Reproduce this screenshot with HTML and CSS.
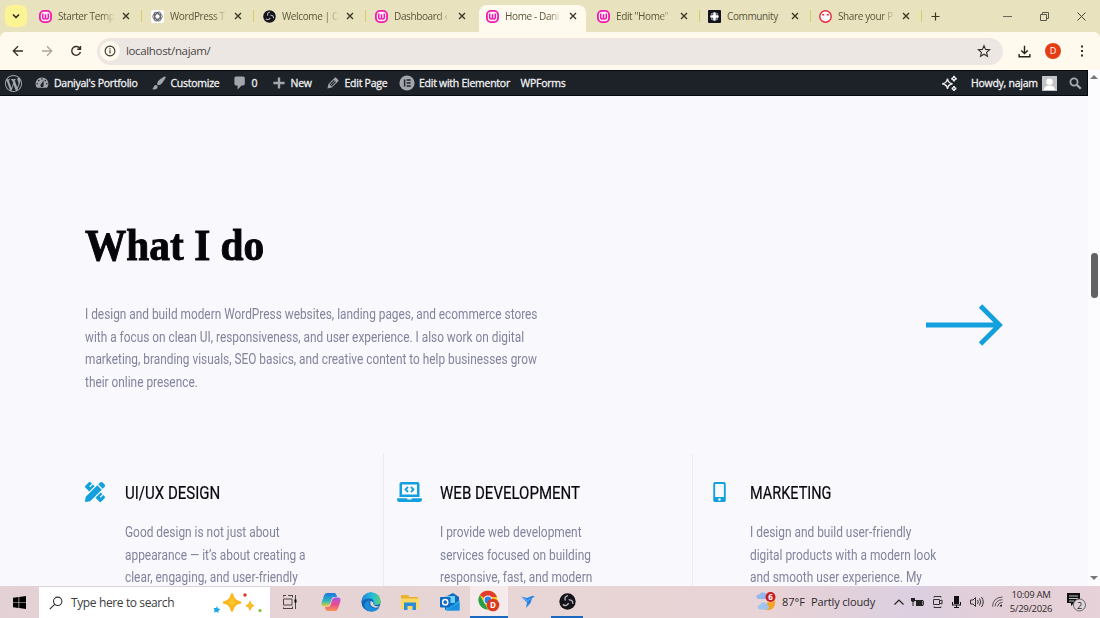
FILE: index.html
```html
<!DOCTYPE html>
<html lang="en">
<head>
<meta charset="utf-8">
<title>Home - Daniyal's Portfolio</title>
<link rel="stylesheet" href="styles.css">
</head>
<body>
<svg class="defs" aria-hidden="true">
  <symbol id="w" viewBox="0 0 13 13"><rect x=".9" y=".9" width="11.2" height="11.2" rx="4" fill="#fff0f8" stroke="#f21aac" stroke-width="1.800"/><path d="M3.700 3.600v3.400q0 2 1.400 2T6.500 7.400V4.200v3.200q0 1.600 1.400 1.600t1.400-2V3.600" fill="none" stroke="#f21aac" stroke-width="1.500"/></symbol>
  <symbol id="x" viewBox="0 0 8 8"><path d="M1 1l6 6M7 1L1 7" fill="none" stroke="#3b3822" stroke-width="1.400"/></symbol>
  <symbol id="obs" viewBox="0 0 16 16"><circle cx="8" cy="8" r="7.700" fill="#15141a"/><path d="M8.500 2.500q-4 1-2.500 4.500M3.500 11q4 2 5.500-1.500M13 10q0-4-4-3.500" fill="none" stroke="#b9b8c0" stroke-width="1.300"/><circle cx="8" cy="8" r="1.300" fill="#15141a"/></symbol>
</svg>
<header class="tabs">
  <button class="tab-search"><svg viewBox="0 0 8 8" width="8" height="8"><path d="M1 2.500l3 3 3-3" fill="none" stroke="#222" stroke-width="1.500"/></svg></button>
  <div class="tab wide"><svg class="fav"><use href="#w"/></svg><span class="title fade"><b>Starter Temp</b></span><svg class="close"><use href="#x"/></svg></div>
  <div class="tab wide"><svg class="fav" viewBox="0 0 13 13"><rect width="13" height="13" rx="2.500" fill="#fff"/><g fill="none" stroke="#55585c" stroke-width=".9"><ellipse cx="6.500" cy="6.500" rx="4.800" ry="2.600"/><ellipse cx="6.500" cy="6.500" rx="4.800" ry="2.600" transform="rotate(60 6.500 6.500)"/><ellipse cx="6.500" cy="6.500" rx="4.800" ry="2.600" transform="rotate(120 6.500 6.500)"/></g></svg><span class="title fade"><b>WordPress T</b></span><svg class="close"><use href="#x"/></svg></div>
  <div class="tab wide"><svg class="fav"><use href="#obs"/></svg><span class="title fade"><b>Welcome | O</b></span><svg class="close"><use href="#x"/></svg></div>
  <div class="tab plain"><svg class="fav"><use href="#w"/></svg><span class="title fade"><b>Dashboard ‹</b></span><svg class="close"><use href="#x"/></svg></div>
  <div class="tab active"><svg class="fav"><use href="#w"/></svg><span class="title fade"><b>Home - Dani</b></span><svg class="close"><use href="#x"/></svg></div>
  <div class="tab"><svg class="fav"><use href="#w"/></svg><span class="title fade"><b>Edit "Home"</b></span><svg class="close"><use href="#x"/></svg></div>
  <div class="tab"><svg class="fav" viewBox="0 0 13 13"><rect width="13" height="13" rx="1" fill="#11131d"/><circle cx="6.500" cy="6.500" r="4.200" fill="#fff"/><path d="M4.800 1.500v3.300H1.500M8.200 1.500v3.300h3.300M4.800 11.500V8.200H1.500M8.200 11.500V8.200h3.300" fill="none" stroke="#11131d" stroke-width=".8"/></svg><span class="title"><b>Community</b></span><svg class="close"><use href="#x"/></svg></div>
  <div class="tab"><svg class="fav" viewBox="0 0 13 13"><circle cx="6.500" cy="6.500" r="5.700" fill="#fff" stroke="#e62639" stroke-width="1.400"/><path d="M3.200 4.800h2M7.800 4.800h2" stroke="#e62639" stroke-width="1.400"/></svg><span class="title fade"><b>Share your P</b></span><svg class="close"><use href="#x"/></svg></div>
  <svg class="new-tab" viewBox="0 0 9 9"><path d="M4.500.5v8M.5 4.500h8" stroke="#3b3822" stroke-width="1.200"/></svg>
  <div class="window-controls">
    <svg viewBox="0 0 9 9"><path d="M0 4.500h9" stroke="#6a685a"/></svg>
    <svg viewBox="0 0 9 9"><path d="M.5 2.500h6v6h-6zM2.500 2.500V.5h6v6h-2" fill="none" stroke="#5a584c"/></svg>
    <svg viewBox="0 0 9 9"><path d="M.5.5l8 8M8.500.5l-8 8" stroke="#45443a"/></svg>
  </div>
</header>
<nav class="toolbar">
  <svg class="nav-icon" viewBox="0 0 12 12"><path d="M11 6H1.500M6 1.300L1.300 6 6 10.700" fill="none" stroke="#33312a" stroke-width="1.300"/></svg>
  <svg class="nav-icon" viewBox="0 0 12 12"><path d="M1 6h9.500M6 1.300L10.700 6 6 10.700" fill="none" stroke="#aaa69c" stroke-width="1.300"/></svg>
  <svg class="nav-icon" viewBox="0 0 12 12"><path d="M10 3.800A4.400 4.400 0 1 0 10.400 7M10.500 1v3.300H7.200" fill="none" stroke="#33312a" stroke-width="1.400"/></svg>
  <div class="omnibox">
    <span class="info"><svg viewBox="0 0 12 12" width="12" height="12"><circle cx="6" cy="6" r="4.900" fill="none" stroke="#33312a" stroke-width="1.100"/><path d="M6 5.300v3.200M6 3.300v1.200" stroke="#33312a" stroke-width="1.100"/></svg></span>
    <span class="url">localhost/najam/</span>
    <svg class="star" viewBox="0 0 24 24"><path d="M12 2.800l2.700 6.400 6.900.6-5.200 4.500 1.600 6.800-6-3.600-6 3.600 1.600-6.800-5.200-4.500 6.900-.6z" fill="none" stroke="#33312a" stroke-width="1.900"/></svg>
  </div>
  <svg class="download" viewBox="0 0 14 14"><path d="M7 .8v8M3.500 5.800L7 9.200l3.500-3.400M1.200 9.800v2.900h11.600V9.800" fill="none" stroke="#252515" stroke-width="1.500"/></svg>
  <span class="profile">D</span>
  <svg class="menu" viewBox="0 0 4 12"><path d="M1 .5h2v2H1zM1 5h2v2H1zM1 9.500h2v2H1z" fill="#33312a"/></svg>
</nav>
<div class="viewport">
  <div class="content">
    <div class="adminbar">
      <a class="item wp"><svg class="ico logo" viewBox="0 0 20 20"><path d="M20 10c0-5.510-4.490-10-10-10C4.480 0 0 4.490 0 10c0 5.520 4.480 10 10 10 5.510 0 10-4.480 10-10zM7.780 15.370L4.370 6.220c.55-.02 1.170-.08 1.170-.08.5-.06.44-1.130-.06-1.110 0 0-1.450.11-2.370.11-.18 0-.37 0-.58-.01C4.120 2.690 6.870 1.110 10 1.110c2.330 0 4.450.87 6.050 2.340-.68-.11-1.650.39-1.650 1.580 0 .74.45 1.360.9 2.100.35.61.55 1.360.55 2.460 0 1.490-1.400 5-1.400 5l-3.030-8.370c.54-.02.82-.17.82-.17.5-.05.44-1.250-.06-1.220 0 0-1.440.12-2.380.12-.87 0-2.330-.12-2.330-.12-.5-.03-.56 1.200-.06 1.220l.92.08 1.260 3.410zM17.410 10c.24-.64.74-1.870.43-4.250.7 1.290 1.050 2.710 1.050 4.250 0 3.290-1.730 6.240-4.400 7.780.97-2.590 1.940-5.200 2.920-7.780zM6.100 18.090C3.120 16.650 1.110 13.530 1.110 10c0-1.300.23-2.480.72-3.590C3.250 10.300 4.670 14.200 6.100 18.090zm4.030-6.630l2.580 6.980c-.86.29-1.760.45-2.710.45-.79 0-1.570-.11-2.290-.33.81-2.380 1.620-4.740 2.420-7.100z"/></svg></a>
      <a class="item site"><svg class="ico" viewBox="0 0 20 20"><path d="M3.760 16h12.480c1.100-1.370 1.760-3.110 1.760-5 0-4.420-3.580-8-8-8s-8 3.580-8 8c0 1.890.66 3.630 1.760 5zM10 4c.55 0 1 .45 1 1s-.45 1-1 1-1-.45-1-1 .45-1 1-1zM6 6c.55 0 1 .45 1 1s-.45 1-1 1-1-.45-1-1 .45-1 1-1zm8 0c.55 0 1 .45 1 1s-.45 1-1 1-1-.45-1-1 .45-1 1-1zm-5.370 5.550L12 7v6c0 1.100-.9 2-2 2s-2-.9-2-2c0-.57.24-1.080.63-1.450zM4 10c.55 0 1 .45 1 1s-.45 1-1 1-1-.45-1-1 .45-1 1-1zm12 0c.55 0 1 .45 1 1s-.45 1-1 1-1-.45-1-1 .45-1 1-1z"/></svg><span>Daniyal's Portfolio</span></a>
      <a class="item customize"><svg class="ico" viewBox="0 0 20 20"><path d="M18.330 3.570s.27-.8-.31-1.360c-.53-.52-1.220-.24-1.220-.24-.61.3-5.760 3.470-7.670 5.570-.86.96-2.060 3.790-1.090 4.820.92.98 3.960-.17 4.790-1 2.060-2.060 5.210-7.170 5.500-7.790zM1.400 17.650c2.370-1.560 1.460-3.410 3.230-4.640.93-.65 2.220-.62 3.080.29.63.67.8 2.570-.16 3.460-1.570 1.450-4 1.550-6.150.89z"/></svg><span>Customize</span></a>
      <a class="item comments"><svg class="ico" viewBox="0 0 20 20"><path d="M5 2h9c1.100 0 2 .9 2 2v7c0 1.100-.9 2-2 2h-2l-5 5v-5H5c-1.100 0-2-.9-2-2V4c0-1.100.9-2 2-2z"/></svg><span>0</span></a>
      <a class="item new"><svg class="ico" viewBox="0 0 20 20"><path d="M8.500 3h3v5.500H17v3h-5.500V17h-3v-5.500H3v-3h5.500z"/></svg><span>New</span></a>
      <a class="item edit"><svg class="ico" viewBox="0 0 20 20"><path d="M13.890 3.390l2.710 2.720c.46.46.42 1.240.03 1.640l-8.010 8.020-5.560 1.160 1.160-5.580s7.600-7.630 7.990-8.030c.39-.39 1.220-.39 1.680.07zm-2.730 2.790l-5.590 5.610 1.110 1.110 5.540-5.650zm-2.970 8.230l5.580-5.600-1.070-1.080-5.590 5.600z"/></svg><span>Edit Page</span></a>
      <a class="item elementor"><svg class="ico" viewBox="0 0 20 20"><circle cx="10" cy="10" r="9.500"/><path d="M7 5.500v9M9.500 6.300h5M9.500 10h5M9.500 13.700h5" stroke="#1d2128" stroke-width="1.800"/></svg><span>Edit with Elementor</span></a>
      <a class="item forms"><span>WPForms</span></a>
      <svg class="sparkle" viewBox="0 0 17 17"><path d="M6.500 3.500Q7 8 11.500 8.800 7 9.500 6.500 14 6 9.500 1.200 8.800 6 8 6.500 3.500zM13 .8q.3 2.400 2.700 2.900-2.400.4-2.700 2.800-.3-2.400-2.700-2.800Q12.700 3.200 13 .8zM13 11q.3 2 2.300 2.500-2 .4-2.300 2.500-.3-2.100-2.300-2.500Q12.700 13 13 11z" fill="none" stroke="#e8e8ec" stroke-width="1.400"/></svg>
      <span class="howdy">Howdy, najam</span>
      <svg class="avatar" viewBox="0 0 15 15"><path fill="#c3c3c7" d="M0 0h15v15H0z"/><circle cx="7.500" cy="5.800" r="3.300" fill="#fff"/><path d="M2 14q0-4.500 5.500-4.500T13 14z" fill="#fff"/></svg>
      <svg class="search" viewBox="0 0 13 13"><circle cx="5" cy="5" r="3.600" fill="none" stroke="#a7aaad" stroke-width="1.800"/><path d="M7.800 7.800l4 4" stroke="#a7aaad" stroke-width="2.300"/></svg>
    </div>
    <section class="intro">
      <div>
        <h2>What I do</h2>
        <p class="copy lead">I design and build modern WordPress websites, landing pages, and ecommerce stores<br>with a focus on clean UI, responsiveness, and user experience. I also work on digital<br>marketing, branding visuals, SEO basics, and creative content to help businesses grow<br>their online presence.</p>
      </div>
      <svg class="arrow" viewBox="0 0 78 44"><path d="M0 22h73M54.500 3L73.500 22 54.500 41" fill="none" stroke="#14a0dc" stroke-width="4.800"/></svg>
    </section>
    <section class="services">
      <article class="first">
        <svg class="svc" viewBox="0 0 512 512"><path d="M109.460 244.040l134.580-134.560-44.120-44.120-61.680 61.680a7.919 7.919 0 0 1-11.210 0l-11.210-11.210c-3.100-3.100-3.100-8.120 0-11.210l61.680-61.680-33.640-33.650C131.470-3.100 111.390-3.100 99 9.290L9.290 99c-12.380 12.390-12.390 32.470 0 44.860l100.170 100.180zm388.470-116.800c18.760-18.760 18.750-49.170 0-67.930l-45.250-45.250c-18.760-18.760-49.180-18.760-67.950 0l-46.020 46.010 113.200 113.200 46.020-46.030zM316.080 82.710l-297 296.960L.32 487.110c-2.530 14.490 10.090 27.110 24.590 24.560l107.450-18.840L429.280 195.900 316.080 82.710zm186.630 285.430l-33.640-33.640-61.680 61.680c-3.100 3.100-8.120 3.100-11.210 0l-11.210-11.210c-3.090-3.100-3.090-8.120 0-11.210l61.680-61.680-44.140-44.140L267.930 402.500l100.210 100.200c12.390 12.390 32.470 12.390 44.860 0l89.710-89.700c12.390-12.390 12.390-32.470 0-44.860z"/></svg>
        <div><h3>UI/UX DESIGN</h3><p class="copy">Good design is not just about<br>appearance — it’s about creating a<br>clear, engaging, and user-friendly</p></div>
      </article>
      <article class="second">
        <svg class="svc" viewBox="0 0 640 512"><path d="M255.030 261.650c6.250 6.250 16.380 6.250 22.630 0l11.310-11.310c6.250-6.250 6.250-16.380 0-22.630L253.250 192l35.710-35.720c6.250-6.250 6.250-16.380 0-22.630l-11.310-11.310c-6.250-6.250-16.380-6.250-22.630 0l-58.340 58.340c-6.250 6.250-6.250 16.380 0 22.630l58.350 58.340zm96.010-11.300l11.310 11.310c6.250 6.250 16.380 6.250 22.630 0l58.340-58.340c6.250-6.250 6.250-16.380 0-22.630l-58.340-58.340c-6.250-6.250-16.380-6.250-22.630 0l-11.310 11.310c-6.250 6.250-6.250 16.380 0 22.630L386.750 192l-35.710 35.720c-6.250 6.250-6.250 16.380 0 22.630zM624 416H381.540c-.74 19.810-14.710 32-32.740 32H288c-18.690 0-33.020-17.470-32.770-32H16c-8.800 0-16 7.200-16 16v16c0 35.200 28.800 64 64 64h512c35.200 0 64-28.800 64-64v-16c0-8.800-7.200-16-16-16zM576 48c0-26.400-21.600-48-48-48H112C85.600 0 64 21.600 64 48v336h512V48zm-64 272H128V64h384v256z"/></svg>
        <div><h3>WEB DEVELOPMENT</h3><p class="copy">I provide web development<br>services focused on building<br>responsive, fast, and modern</p></div>
      </article>
      <article class="third">
        <svg class="svc" viewBox="0 0 320 512"><path d="M272 0H48C21.500 0 0 21.500 0 48v416c0 26.500 21.500 48 48 48h224c26.500 0 48-21.500 48-48V48c0-26.500-21.500-48-48-48zM160 480c-17.700 0-32-14.300-32-32s14.300-32 32-32 32 14.300 32 32-14.300 32-32 32zm112-108c0 6.600-5.400 12-12 12H60c-6.600 0-12-5.400-12-12V60c0-6.600 5.400-12 12-12h200c6.600 0 12 5.400 12 12v312z"/></svg>
        <div><h3>MARKETING</h3><p class="copy">I design and build user-friendly<br>digital products with a modern look<br>and smooth user experience. My</p></div>
      </article>
    </section>
  </div>
  <div class="scrollbar"><i class="up"></i><i class="thumb"></i><i class="down"></i></div>
</div>
<footer class="taskbar">
  <div class="cell start"><svg viewBox="0 0 14 14" width="13" height="13"><path d="M0 2l6-.9v5.500H0zM6.700 1L14 0v6.600H6.700zM0 7.300h6v5.600L0 12zM6.700 7.300H14V14l-7.300-1z"/></svg></div>
  <div class="find">
    <svg viewBox="0 0 14 14" width="14" height="14"><circle cx="8.700" cy="5.300" r="4.200" fill="none" stroke="#333" stroke-width="1.100"/><path d="M5.700 8.300L.8 13.200" stroke="#333" stroke-width="1.200"/></svg>
    <span class="hint">Type here to search</span>
    <svg class="stars" viewBox="0 0 50 22"><path d="M19 2.500q1.200 6.700 8 8-6.800 1.300-8 8-1.200-6.700-8-8 6.800-1.300 8-8z" fill="#fbc52a" stroke="#f8b822" stroke-width="2.600" stroke-linejoin="round"/><path d="M37 9.500q.7 3.600 3.700 4.200-3 .6-3.700 4.200-.7-3.600-3.700-4.200 3-.6 3.700-4.200z" fill="#fbc52a" stroke="#f8b822" stroke-width="1.300" stroke-linejoin="round"/><path d="M4 14l1 2.500 2.500.4-2 1.800-.2 2.300-2-1.300-2.300 1 .6-2.500L.5 16l2.600-.1z" fill="#1ba9e4"/><circle cx="32" cy="3" r="1.700" fill="#d83b20"/><circle cx="47" cy="18.500" r="1.600" fill="#7cc52c"/></svg>
  </div>
  <div class="cell w40"><svg viewBox="0 0 14 14" width="14" height="14"><path d="M0 .5h3M5 .5h5M0 13.500h10M.5 4h8.500v6H.5zM0 .5v2M9.500.5v2M0 13.500v-2M9.500 13.500v-2M12.500 0v14" fill="none" stroke="#4a4547"/><path d="M11.500 4.500h2v3h-2z"/></svg></div>
  <div class="cell w42"><svg viewBox="0 0 20 18" width="20" height="18"><defs><linearGradient id="c1" x2="0" y2="1"><stop stop-color="#1c75e4"/><stop offset=".6" stop-color="#30b7bd"/><stop offset="1" stop-color="#f3cf26"/></linearGradient><linearGradient id="c2" x2="0" y2="1"><stop stop-color="#a65ae8"/><stop offset=".5" stop-color="#e94a8c"/><stop offset="1" stop-color="#f99451"/></linearGradient></defs><path d="M6 0h7q2 0 2.500 2l.5 2h-3q-2 0-2.500 2L9 11q-.7 2.500-3 2.500H3Q-.5 13.500.7 9.500L3 2.500Q3.800 0 6 0z" fill="url(#c1)"/><path d="M14 18H7q-2 0-2.500-2L4 14h3q2 0 2.500-2L11 7q.7-2.500 3-2.500h3q3.500 0 2.300 4L17 15.500Q16.200 18 14 18z" fill="url(#c2)"/></svg></div>
  <div class="cell w38"><svg viewBox="0 0 20 20" width="20" height="20"><defs><linearGradient id="e1" x2="1"><stop stop-color="#2186d8"/><stop offset=".6" stop-color="#25bfd8"/><stop offset="1" stop-color="#60d06a"/></linearGradient></defs><circle cx="10" cy="10" r="9.600" fill="#1265b5"/><path d="M.4 10A9.600 9.600 0 0 1 19.600 9.500Q19.500 13 15 13q-3.500 0-2.500-2.500Q13 6.500 8.500 6.500 3 6.500.4 10z" fill="url(#e1)"/><path d="M8.500 8.500Q6.500 16 15 16.500q2 0 3.500-1-3 4.500-8.500 4.100Q3 18 3.500 12.500 5 8.500 8.500 8.500z" fill="#1a8edb"/><path d="M9.500 9q-1.500 5 4 6.500 3 .5 5-1Q14 15 12 12q1-2-2.500-3z" fill="#e5d5d8"/></svg></div>
  <div class="cell w40"><svg viewBox="0 0 18 16" width="18" height="16"><path d="M0 1h7l1.500 2H17v12H0z" fill="#eab030"/><path d="M0 4.500h18V15H0z" fill="#fbd765"/><path d="M3 8.500h12V16h-3.500v-4h-5v4H3z" fill="#2c8cd6"/></svg></div>
  <div class="cell w40"><svg viewBox="0 0 20 20" width="20" height="20"><path d="M5 5l8-4 6 4v13H5z" fill="#1269bd"/><path d="M6 4h9v7H6z" fill="#67d4f5"/><path d="M6 11l6 3 7.500-6v10.500H6z" fill="#27aceb"/><path d="M6 18.500l13.500-8V18.500z" fill="#1890df"/><rect y="5" width="10.500" height="10.500" rx="1" fill="#0f69c3"/><circle cx="5.200" cy="10.200" r="2.600" fill="none" stroke="#fff" stroke-width="1.500"/></svg></div>
  <div class="cell w38 current"><svg viewBox="0 0 22 22" width="22" height="22"><circle cx="10" cy="10" r="9.500" fill="#fbc81c"/><path d="M10 10L1.800 5.200A9.500 9.500 0 0 1 18.200 5.500L19 7h-9z" fill="#e33b2d"/><path d="M1.800 5.200L6.500 13 10 19.500A9.500 9.500 0 0 1 1.800 5.200z" fill="#269f4c"/><circle cx="10" cy="10" r="4.500" fill="#fff"/><circle cx="10" cy="10" r="3.500" fill="#3080e8"/><circle cx="15" cy="15" r="6.300" fill="#da3a20"/><text class="badge" x="15" y="17.800">D</text></svg></div>
  <div class="cell w40"><svg viewBox="0 0 14 12" width="14" height="12"><path d="M0 .5l6 1.500L11 0l3 .3-3 2L9.500 7 5 12l1-5.500z" fill="#2482e8"/><path d="M1 1l5.500 4L9.500 2.500" fill="none" stroke="#8fc4f5" stroke-width=".8"/></svg></div>
  <div class="cell w32 running"><svg width="17" height="17"><use href="#obs"/></svg></div>
  <div class="tray">
    <svg class="weather" viewBox="0 0 20 19"><path d="M11 10q6 1 8-2 1 6-3 9-5 3-9-1 5-1 4-6z" fill="#f6a425"/><path d="M4 7q-4 0-3.500-3Q1 2 3.500 2.500 4.500 0 7.500.5t3.500 4q0 2.500-2.500 2.500z" fill="#8fb9ec"/><path d="M5 17.500q-3.500 0-3-3 .5-2 2.500-2 1-3 4-2 2.500 0 3 3 2 .5 1.500 2.500-.5 1.500-2 1.500z" fill="#9ec5f2"/><circle cx="14.500" cy="5" r="5" fill="#c51d22"/><text class="badge" x="14.500" y="7.800">6</text></svg>
    <span class="temp">87°F</span><span class="cond">Partly cloudy</span>
    <svg class="t1" viewBox="0 0 10 6"><path d="M.5 5.500L5 1l4.500 4.500" fill="none" stroke="#222" stroke-width="1.200"/></svg>
    <svg class="t2" viewBox="0 0 13 10"><path d="M3 3.500h9v5H5M12 5h1v2h-1" fill="none" stroke="#222"/><path d="M5 4h6v4H5zM0 1h4v3L2.500 5v4h-1V5L0 4z" fill="#222"/></svg>
    <svg class="t3" viewBox="0 0 10 12"><path d="M.5 3.500h6v5h-6zM6.500 5L9 4v4L6.500 7M1 1.500V.5h7v1M1 10.500v1h7v-1" fill="none" stroke="#333"/></svg>
    <svg class="t4" viewBox="0 0 9 12"><path d="M2 0h5v8H2zM0 6h1v2.500h7V6h1v3.500H5V11h2v1H2v-1h2V9.500H0z" fill="#111"/></svg>
    <svg class="t5" viewBox="0 0 14 12"><path d="M.5 4h2.500L5.500 1.500v9L3 8H.5zM7.500 4q1.500 2 0 4M9.500 2.500q2.500 3.500 0 7M11.500 1q3.500 5 0 10" fill="none" stroke="#333"/></svg>
    <svg class="t6" viewBox="0 0 11 11"><path d="M.5 10.500Q1 1.500 10.500 1M3 10.500Q3.500 4 10.500 3.700M5.500 10.500Q6 6.500 10.500 6.300" fill="none" stroke="#444" stroke-width=".9"/><path d="M7.500 10.500q.4-2 2.500-2v2z" fill="#222"/></svg>
    <div class="clock"><span>10:09 AM</span><span>5/29/2026</span></div>
    <svg class="notif" viewBox="0 0 20 20"><path d="M0 1h13v10H7l-3 3v-3H0z" fill="#111"/><path d="M2 4h9M2 6.500h9M2 9h5" stroke="#eee" stroke-width=".8"/><circle cx="12.500" cy="13" r="6" fill="#dfd3d9" stroke="#6b686b"/><text class="count" x="12.500" y="16.500">2</text></svg>
  </div>
</footer>
</body>
</html>
```
FILE: styles.css
```css
* { box-sizing: border-box; }
body { margin: 0; width: 1100px; height: 618px; overflow: hidden; display: flex; flex-direction: column; font-family: "Open Sans", "Noto Sans", sans-serif; background: #fff9ee; }
svg { display: block; flex: none; }
.defs { display: none; }

.tabs { height: 38px; flex: none; display: flex; align-items: flex-start; background: #e9e2bf; margin-bottom: -6px; }
.tab-search { width: 22px; height: 22px; margin: 5px 4px 0 5px; padding: 0; border: 0; border-radius: 7px; background: #fff494; display: grid; place-items: center; }
.tab { width: 111px; height: 32px; padding: 0 0 0 8px; display: flex; align-items: center; position: relative; flex: none; }
.tab.wide { width: 112px; }
.tab::after { content: ""; width: 1px; height: 12px; background: #d8cb62; margin-left: 11px; }
.tab.plain::after, .tab.active::after { background: transparent; }
.fav { width: 13px; height: 13px; }
.title { width: 57px; margin-left: 6px; white-space: nowrap; }
.fade { -webkit-mask-image: linear-gradient(90deg, #000 76%, transparent 100%); mask-image: linear-gradient(90deg, #000 76%, transparent 100%); }
.title b { font-weight: 400; font-size: 10px; letter-spacing: -.38px; color: #5a5638; display: block; line-height: 16px; }
.close { width: 8px; height: 8px; margin-left: 7px; }
.active { z-index: 1; }
.active::before { content: ""; position: absolute; z-index: -1; left: 1px; top: 5px; width: 107px; height: 28px; background: #fff9ee; border-radius: 8px 8px 0 0; }
.new-tab { width: 9px; height: 9px; margin: 12px 0 0 9px; }
.window-controls { display: flex; gap: 28px; margin: 12px 14px 0 auto; }
.window-controls svg { width: 9px; height: 9px; }

.toolbar { height: 38px; flex: none; position: relative; display: flex; align-items: center; background: #fff9ee; border-radius: 6px 6px 0 0; padding-left: 12px; }
.nav-icon { width: 12px; height: 12px; margin-right: 17px; }
.omnibox { width: 906px; height: 27px; margin-left: -2px; border-radius: 14px; background: #ede7e4; display: flex; align-items: center; padding: 0 12px 0 3px; }
.info { width: 20px; height: 20px; border-radius: 50%; background: #fff9ee; display: grid; place-items: center; }
.url { font-size: 11.500px; color: #4a4844; margin-left: 6px; letter-spacing: -.35px; line-height: 20px; }
.star { width: 14px; height: 14px; margin-left: auto; }
.download { width: 13px; height: 13px; margin-left: 15px; }
.profile { width: 16px; height: 16px; border-radius: 50%; background: #e43d14; color: #fff; font: 9px/16px "Open Sans", sans-serif; text-align: center; margin-left: 14px; }
.menu { width: 4px; height: 12px; margin-left: 19px; }

.viewport { height: 516px; flex: none; display: flex; overflow: hidden; }
.content { width: 1088px; background: #f8f8fd; }
.adminbar { height: 26px; background: #1d2128; border: 1px solid #08090d; border-left: 0; display: flex; align-items: center; font-size: 10.500px; letter-spacing: -.26px; color: #f0f0f1; -webkit-text-stroke: .3px #f0f0f1; }
.item { display: flex; align-items: center; height: 24px; white-space: nowrap; flex: none; }
.ico { width: 16px; height: 16px; fill: #a2a5ab; margin-right: 4px; }
.wp { width: 34px; padding-left: 5px; }
.logo { width: 17px; height: 17px; }
.site { width: 116.500px; }
.customize { width: 81px; }
.comments { width: 39px; }
.new { width: 54px; }
.edit { width: 74.500px; }
.elementor { width: 121.500px; }
.sparkle { width: 17px; height: 17px; margin-left: auto; }
.howdy { margin-left: 13px; width: 66px; white-space: nowrap; }
.avatar { width: 15px; height: 15px; margin-left: 5px; }
.search { width: 13px; height: 13px; margin: 0 5px 0 12px; }

.intro { height: 358px; display: flex; justify-content: space-between; padding: 125px 84px 0 85px; }
h2 { margin: 0; font: 700 44px/50px "Liberation Serif", serif; color: #05050a; transform: scaleX(.94); transform-origin: 0 0; white-space: nowrap; -webkit-text-stroke: .9px #05050a; }
.copy { margin: 0; font: 14px/22.500px Roboto, sans-serif; color: #82839c; transform: scaleX(.85); transform-origin: 0 0; white-space: nowrap; }
.lead { margin-top: 32px; transform: scaleX(.847); }
.arrow { width: 78px; height: 44px; margin-top: 82px; }
.services { height: 132px; display: grid; grid-template-columns: 383px 309px 1fr; overflow: hidden; }
article { display: flex; padding-top: 28px; border-left: 1px solid #ebebf1; }
.first { padding-left: 84px; border-color: transparent; }
.second { padding-left: 13px; }
.third { padding-left: 20px; }
.svc { height: 20px; width: 20px; fill: #14a0dc; margin-right: 20px; }
.second .svc { width: 25px; margin-right: 18px; }
.third .svc { width: 13px; margin-right: 24px; }
h3 { margin: 0 0 17px; font: 400 18px/22px Roboto, sans-serif; color: #08080c; transform: scaleX(.835); transform-origin: 0 0; white-space: nowrap; -webkit-text-stroke: .2px #08080c; }
.third h3 { transform: scaleX(.805); }

.scrollbar { width: 12px; background: #fcfbfd; display: flex; flex-direction: column; align-items: center; }
.up { border: 4px solid transparent; border-top: 0; border-bottom: 4px solid #777; margin-top: 5px; }
.thumb { width: 7px; height: 45px; border-radius: 4px; background: #626164; margin-top: 174px; }
.down { border: 4px solid transparent; border-bottom: 0; border-top: 4px solid #777; margin-top: auto; margin-bottom: 6px; }

.taskbar { height: 32px; flex: none; display: flex; background: linear-gradient(90deg, #e3d1d5, #e8d5d5 50%, #e8d3d6 70%, #dccfe0 83%, #e4cfd6 92%, #e6d2d8); }
.cell { display: grid; place-items: center; height: 32px; flex: none; }
.start { width: 39px; }
.find { width: 231px; background: #fff; display: flex; align-items: center; padding-left: 10px; border-top: 1px solid #ddd3d6; }
.hint { font-size: 12px; color: #3c3c3c; margin-left: 8px; width: 142px; white-space: nowrap; letter-spacing: -.38px; line-height: 16px; }
.stars { width: 50px; height: 22px; }
.w40 { width: 40px; }
.w42 { width: 42px; }
.w38 { width: 38px; }
.w32 { width: 32px; }
.current { background: #f6ebec; border-bottom: 2px solid #1b68c0; }
.running { border-bottom: 2px solid #1b68c0; margin-left: 3px; }
.badge { font: 700 8px "Open Sans", sans-serif; fill: #fff; text-anchor: middle; }
.count { font: 9px "Open Sans", sans-serif; fill: #222; text-anchor: middle; }
.tray { margin-left: auto; display: flex; align-items: center; color: #2d2a2c; font-size: 11px; white-space: nowrap; padding-bottom: 1px; }
.weather { width: 20px; height: 19px; }
.temp { margin-left: 6px; width: 29px; }
.cond { width: 83px; letter-spacing: -.15px; }
.t1 { width: 10px; height: 6px; }
.t2 { width: 13px; height: 10px; margin-left: 7px; }
.t3 { width: 10px; height: 12px; margin-left: 9px; }
.t4 { width: 9px; height: 12px; margin-left: 9px; }
.t5 { width: 14px; height: 12px; margin-left: 9px; }
.t6 { width: 11px; height: 11px; margin-left: 8px; }
.clock { width: 50px; margin-left: 3px; display: flex; flex-direction: column; align-items: center; font-size: 9.500px; line-height: 14px; letter-spacing: -.3px; }
.notif { width: 20px; height: 20px; margin: 0 13px 0 11px; }
```
